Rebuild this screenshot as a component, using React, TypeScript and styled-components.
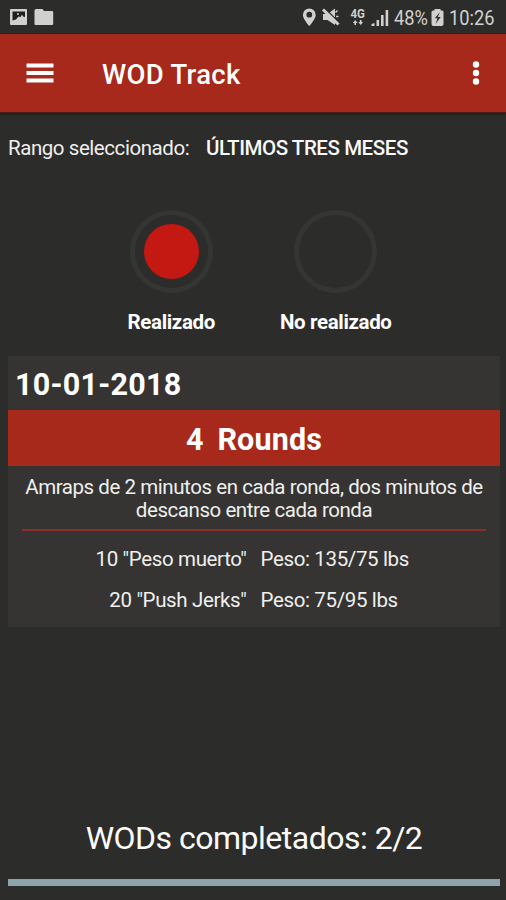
import React from "react";
import styled, { createGlobalStyle } from "styled-components";

const GlobalStyle = createGlobalStyle`
  * { box-sizing: border-box; }
  body { margin: 0; background: #2c2c2a; }
`;

const Screen = styled.div`
  width: 506px;
  height: 900px;
  display: flex;
  flex-direction: column;
  overflow: hidden;
  background: #2c2c2a;
  color: #efefee;
  font-family: Roboto, sans-serif;
  font-size: 20.5px;
`;

const StatusBar = styled.header`
  height: 34px;
  flex: none;
  display: flex;
  justify-content: space-between;
  background: #2c2c2a;
  border-bottom: 1px solid #1b2a28;
  color: #d0d0cf;
`;

const StatusIcons = styled.svg`
  display: block;
  height: 33px;
  flex: none;
`;

const StatusGroup = styled.div`
  display: flex;
`;

const StatusText = styled.span<{ $width: number }>`
  width: ${(p) => p.$width}px;
  padding-top: 1px;
  font-size: 21px;
  line-height: 34px;
  white-space: nowrap;
  transform: scaleX(0.87);
  transform-origin: 0 50%;
`;

const AppBar = styled.nav`
  height: 79px;
  flex: none;
  display: flex;
  align-items: center;
  background: #a6291b;
  border-bottom: 1px solid #4a1d18;
  box-shadow: 0 1px 2px #171918;
  color: #fff;
`;

const MenuButton = styled.button`
  width: 102px;
  height: 78px;
  padding: 0 0 0 26px;
  border: 0;
  background: none;
  display: flex;
  align-items: center;
`;

const MoreButton = styled(MenuButton)`
  width: 60px;
  margin-left: auto;
`;

const Title = styled.h1`
  margin: 0;
  padding-top: 4px;
  font-size: 27.5px;
  font-weight: 500;
  line-height: 32px;
  letter-spacing: 0.3px;
`;

const RangeRow = styled.div`
  height: 97px;
  flex: none;
  padding: 23px 8px 0;
  line-height: 25px;
  display: flex;
  gap: 17px;
  white-space: nowrap;
  letter-spacing: -0.44px;
`;

const RangeLabel = styled.span`
  width: 181px;
`;

const RangeValue = styled.span`
  font-weight: 500;
  color: #f8f8f8;
`;

const Options = styled.div`
  height: 146px;
  flex: none;
  display: flex;
  padding-left: 89px;
`;

const Option = styled.button`
  width: 164.5px;
  padding: 0;
  border: 0;
  background: none;
  color: #fff;
  font: 700 20.5px/24px Roboto, sans-serif;
  letter-spacing: -0.35px;
  display: flex;
  flex-direction: column;
  align-items: center;
  gap: 17px;
  white-space: nowrap;
`;

const Ring = styled.span`
  width: 83px;
  height: 83px;
  border: 5px solid #353533;
  border-radius: 50%;
  display: flex;
  align-items: center;
  justify-content: center;
`;

const Dot = styled.span`
  width: 55px;
  height: 55px;
  border-radius: 50%;
  background: #c41812;
`;

const Card = styled.article`
  width: 492px;
  height: 271px;
  margin-left: 8px;
  flex: none;
  background: #353432;
`;

const DateHeading = styled.h2`
  margin: 0;
  height: 54px;
  padding: 2px 0 0 7px;
  color: #fff;
  font-size: 30.5px;
  line-height: 54px;
  letter-spacing: 0.25px;
`;

const RoundsBanner = styled.h3`
  margin: 0;
  height: 56px;
  padding-top: 2px;
  background: #a6291b;
  color: #fff;
  font-size: 30.5px;
  line-height: 56px;
  text-align: center;
  white-space: pre;
  word-spacing: -0.8px;
  letter-spacing: 0.15px;
`;

const Description = styled.p`
  margin: 0 14px;
  height: 65px;
  padding-top: 10px;
  border-bottom: 2px solid #8d2f29;
  line-height: 23px;
  text-align: center;
  white-space: pre;
  letter-spacing: -0.44px;
`;

const Exercise = styled.div`
  display: grid;
  grid-template-columns: 238.5px 1fr;
  column-gap: 14px;
  height: 41px;
  line-height: 24px;
  white-space: nowrap;
  letter-spacing: -0.36px;

  & > :first-child {
    text-align: right;
  }
`;

const ExerciseList = styled.div`
  padding-top: 16px;
`;

const Footer = styled.footer`
  margin-top: auto;
  padding: 0 6px 14px 8px;
`;

const Completed = styled.p`
  margin: 0 0 21px;
  color: #fafafa;
  font-size: 32px;
  line-height: 40px;
  text-align: center;
  letter-spacing: -0.5px;
`;

const Progress = styled.div`
  height: 7px;
  background: #8ca4aa;
`;

const exercises = [
  { name: '10 "Peso muerto"', weight: "Peso: 135/75 lbs" },
  { name: '20 "Push Jerks"', weight: "Peso: 75/95 lbs" },
];

export default function App() {
  return (
    <>
      <GlobalStyle />
      <Screen>
        <StatusBar>
          <StatusIcons width="60" viewBox="0 0 60 33" fill="#d0d0cf">
            <path d="M11 9h15q1 0 1 1v14q0 1-1 1H11q-1 0-1-1V10q0-1 1-1z" />
            <path d="M12.500 11.500h12.500v5.500l-2-.5-1-2-1.500 2.500-2-.5-2.500 3-3.500 1z" fill="#1f1f1e" />
            <path d="M17 13.200h2v1.600h-2z" />
            <path d="M36 9h6.500l1.500 2h8q1.200 0 1.200 1.200V24q0 1-1.200 1H35.500q-1 0-1-1V10.500q0-1.500 1.500-1.500z" />
          </StatusIcons>
          <StatusGroup>
            <StatusIcons width="94" viewBox="300 0 94 33" fill="#d0d0cf">
              <path
                fillRule="evenodd"
                d="M309.300 8.500a6.400 6.400 0 0 1 6.400 6.400c0 4-6.400 11.100-6.400 11.100s-6.400-7.100-6.400-11.100a6.400 6.400 0 0 1 6.400-6.400zm0 3.300a2.900 2.900 0 1 0 0 5.800 2.900 2.900 0 0 0 0-5.800z"
              />
              <path d="M323 14h4.500l7.500-5.500v16.500l-7.500-5H323z" />
              <path d="M335.500 12.500l2-2M336 16.500h2.500" stroke="#d0d0cf" strokeWidth="1.400" />
              <path d="M325.500 9l14 14" stroke="#2c2c2a" strokeWidth="1.600" />
              <path d="M323 9.500l15.500 15" stroke="#d0d0cf" strokeWidth="3" />
              <text x="350.500" y="18.200" fontSize="12" fontWeight="700" textLength="14.500" lengthAdjust="spacingAndGlyphs" fontFamily="Roboto, sans-serif">
                4G
              </text>
              <path d="M355.200 20l2.400 3h-1.600v2h-1.600v-2h-1.600zM360.700 25l2.400-3h-1.600v-2h-1.600v2h-1.600z" />
              <path d="M371.500 26v-2l3-1v3zM376.500 20h2.600v6h-2.600zM381 15h2.600v11H381zM385.600 10h2.600v16h-2.600z" />
            </StatusIcons>
            <StatusText $width={37}>48%</StatusText>
            <StatusIcons width="18" viewBox="431 0 18 33">
              <path
                d="M434.500 10.500V9h6v1.500h1.500q1.500 0 1.500 1.500v12q0 2-2 2h-8q-2 0-2-2V12q0-1.500 1.500-1.500z"
                fill="#d0d0cf"
              />
              <path d="M440 12l-5.200 6.300h2.800L435.500 24l5.200-7h-2.900z" fill="#2c2c2a" />
            </StatusIcons>
            <StatusText $width={57}>10:26</StatusText>
          </StatusGroup>
        </StatusBar>

        <AppBar>
          <MenuButton aria-label="Menú">
            <svg width="28" height="20" viewBox="0 0 28 20" fill="#fff">
              <path d="M.5.500h27v4H.5zM.5 8h27v4H.5zM.5 15.500h27v4H.5z" />
            </svg>
          </MenuButton>
          <Title>WOD Track</Title>
          <MoreButton aria-label="Más opciones">
            <svg width="8" height="26" viewBox="0 0 8 26" fill="#fff">
              <circle cx="4" cy="4.500" r="3.200" />
              <circle cx="4" cy="13" r="3.200" />
              <circle cx="4" cy="21.500" r="3.200" />
            </svg>
          </MoreButton>
        </AppBar>

        <RangeRow>
          <RangeLabel>Rango seleccionado:</RangeLabel>
          <RangeValue>ÚLTIMOS TRES MESES</RangeValue>
        </RangeRow>

        <Options>
          <Option>
            <Ring>
              <Dot />
            </Ring>
            Realizado
          </Option>
          <Option>
            <Ring />
            No realizado
          </Option>
        </Options>

        <Card>
          <DateHeading>10-01-2018</DateHeading>
          <RoundsBanner>{"4  Rounds"}</RoundsBanner>
          <Description>
            {"Amraps de 2 minutos en cada ronda, dos minutos de\ndescanso entre cada ronda"}
          </Description>
          <ExerciseList>
            {exercises.map((e) => (
              <Exercise key={e.name}>
                <span>{e.name}</span>
                <span>{e.weight}</span>
              </Exercise>
            ))}
          </ExerciseList>
        </Card>

        <Footer>
          <Completed>WODs completados: 2/2</Completed>
          <Progress />
        </Footer>
      </Screen>
    </>
  );
}
